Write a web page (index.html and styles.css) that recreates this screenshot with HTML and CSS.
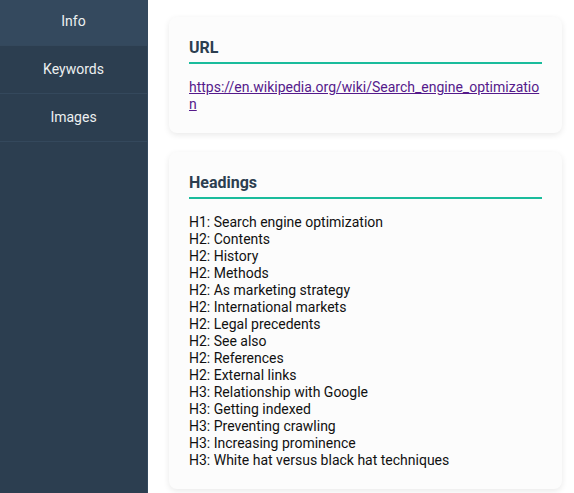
FILE: index.html
```html
<!DOCTYPE html>
<html lang="en">
<head>
    <meta charset="UTF-8">
    <meta name="viewport" content="width=device-width, initial-scale=1.0">
    <title>SEO Inspector</title>
    <link rel="stylesheet" href="styles.css">
</head>
<body>
    <aside class="sidebar">
        <nav class="tabs">
            <div class="tab active">Info</div>
            <div class="tab">Keywords</div>
            <div class="tab">Images</div>
        </nav>
    </aside>

    <main class="content">
        <section class="card">
            <h2 class="card-title">URL</h2>
            <a class="page-url" href="https://en.wikipedia.org/wiki/Search_engine_optimization">https://en.wikipedia.org/wiki/Search_engine_optimization</a>
        </section>

        <section class="card">
            <h2 class="card-title">Headings</h2>
            <ul class="headings">
                <li>H1: Search engine optimization</li>
                <li>H2: Contents</li>
                <li>H2: History</li>
                <li>H2: Methods</li>
                <li>H2: As marketing strategy</li>
                <li>H2: International markets</li>
                <li>H2: Legal precedents</li>
                <li>H2: See also</li>
                <li>H2: References</li>
                <li>H2: External links</li>
                <li>H3: Relationship with Google</li>
                <li>H3: Getting indexed</li>
                <li>H3: Preventing crawling</li>
                <li>H3: Increasing prominence</li>
                <li>H3: White hat versus black hat techniques</li>
            </ul>
        </section>
    </main>
</body>
</html>
```

FILE: styles.css
```css
body {
    margin: 0;
    display: flex;
    min-height: 100vh;
    font-family: Roboto, "Noto Sans", sans-serif;
    font-size: 14px;
    line-height: 17px;
    background: #ffffff;
    overflow: hidden;
}

.sidebar {
    width: 147px;
    flex-shrink: 0;
    background-color: #2c3e50;
    border-right: 1px solid #34495e;
    height: 100vh;
}

.tabs {
    margin-top: -2px;
}

.tab {
    padding: 15px 0;
    text-align: center;
    color: #ecf0f1;
    border-bottom: 1px solid #34485c;
    cursor: pointer;
}

.tab.active {
    background-color: #34495e;
}

.content {
    flex: 1;
    display: flex;
    flex-direction: column;
    gap: 19px;
    padding: 17px 12px 0 21px;
}

.card {
    background-color: #fcfcfc;
    border-radius: 8px;
    box-shadow: 0 2px 6px rgba(0, 0, 0, 0.09);
    padding: 21px 20px 20px;
}

.card-title {
    margin: 0 0 15px;
    padding-bottom: 5px;
    font-size: 16px;
    line-height: 19px;
    font-weight: bold;
    color: #2c3e50;
    border-bottom: 2px solid #1abc9c;
}

.page-url {
    display: block;
    color: #551a8b;
    word-break: break-all;
}

.headings {
    list-style: none;
    margin: 0;
    padding: 0;
    color: #111111;
}
```
